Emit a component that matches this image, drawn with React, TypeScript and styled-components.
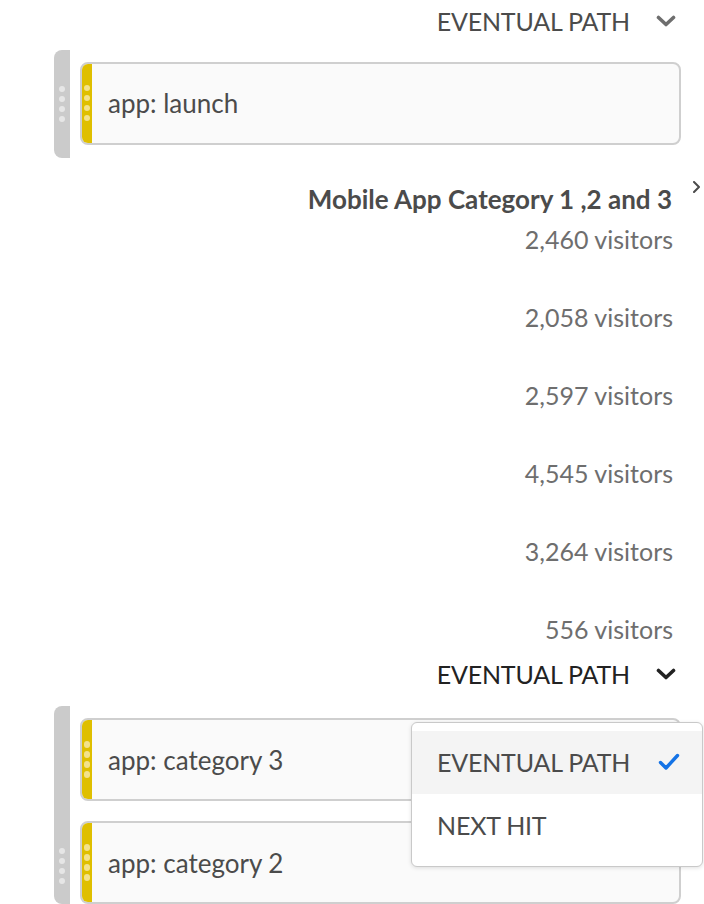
import React from 'react';
import styled, { createGlobalStyle } from 'styled-components';

const GlobalStyle = createGlobalStyle`
  html, body {
    margin: 0;
    padding: 0;
    background: #ffffff;
  }
  body {
    font-family: Lato, "Liberation Sans", sans-serif;
    color: #4b4b4b;
  }
`;

const Page = styled.div`
  width: 704px;
  height: 904px;
  overflow: hidden;
  display: flex;
  flex-direction: column;
  padding-top: 2px;
  box-sizing: border-box;
`;

const PathHeader = styled.div<{ $dark?: boolean; $top?: number }>`
  position: relative;
  height: ${(p) => (p.$dark ? 44 : 42)}px;
  margin-top: ${(p) => p.$top ?? 0}px;
  display: flex;
  align-items: center;
  justify-content: flex-end;
  gap: 26px;
  padding-right: 28px;
  font-size: 25px;
  letter-spacing: -0.2px;
  color: ${(p) => (p.$dark ? '#222222' : '#4b4b4b')};
`;

const Chevron = styled.svg`
  width: 20px;
  height: 12px;
`;

const Group = styled.div<{ $top: number }>`
  display: flex;
  margin-top: ${(p) => p.$top}px;
  padding-left: 54px;
  padding-right: 23px;
`;

const Rail = styled.div<{ $dotsAt: 'start' | 'end' }>`
  width: 16px;
  flex: none;
  background: #cbcbcb;
  border-radius: 8px 0 0 8px;
  display: flex;
  flex-direction: column;
  align-items: center;
  justify-content: ${(p) => (p.$dotsAt === 'start' ? 'flex-start' : 'flex-end')};
  padding: ${(p) => (p.$dotsAt === 'start' ? '36px 0 0' : '0 0 20px')};
  box-sizing: border-box;
`;

const Dots = styled.div<{ $color: string }>`
  display: flex;
  flex-direction: column;
  gap: 3.5px;

  span {
    display: block;
    width: 6.5px;
    height: 6.5px;
    border-radius: 50%;
    background: ${(p) => p.$color};
  }
`;

const Cards = styled.div<{ $pad: string }>`
  flex: 1;
  display: flex;
  flex-direction: column;
  gap: 20px;
  padding: ${(p) => p.$pad};
  margin-left: 10px;
`;

const Card = styled.div`
  height: 83px;
  box-sizing: border-box;
  border: 2px solid #cfcfcf;
  border-radius: 8px;
  background: #fafafa;
  display: flex;
  align-items: stretch;
  overflow: hidden;
`;

const Strip = styled.div`
  width: 10px;
  flex: none;
  background: #dfbf00;
  display: flex;
  align-items: center;
  justify-content: center;
`;

const CardLabel = styled.div`
  display: flex;
  align-items: center;
  padding-left: 16px;
  font-size: 26px;
  color: #4b4b4b;
`;

const Summary = styled.div`
  margin-top: 21px;
  display: flex;
  flex-direction: column;
  align-items: flex-end;
`;

const TitleRow = styled.div`
  height: 40px;
  display: flex;
  align-items: center;
  padding-right: 4px;
`;

const Title = styled.div`
  font-size: 26px;
  font-weight: 700;
  color: #4b4b4b;
`;

const SmallChevron = styled.svg`
  width: 7px;
  height: 12px;
  margin-left: 21px;
  align-self: flex-start;
  margin-top: 2px;
`;

const Visitors = styled.div<{ $first?: boolean }>`
  height: 40px;
  line-height: 40px;
  margin-top: ${(p) => (p.$first ? 0 : 38)}px;
  padding-right: 31px;
  font-size: 25px;
  color: #6e6e6e;
`;

const Menu = styled.div`
  position: absolute;
  top: 67px;
  right: 1px;
  width: 292px;
  height: 145px;
  box-sizing: border-box;
  background: #ffffff;
  border: 1.5px solid #c9c9c9;
  border-radius: 6px;
  box-shadow: 0 1px 4px rgba(0, 0, 0, 0.12);
  padding-top: 8px;
  z-index: 2;
  color: #4b4b4b;
`;

const MenuItem = styled.div<{ $active?: boolean }>`
  height: 63px;
  display: flex;
  align-items: center;
  justify-content: space-between;
  padding: 0 22px 0 25px;
  background: ${(p) => (p.$active ? '#f4f4f4' : 'transparent')};
  font-size: 25px;
`;

const visitors = ['2,460', '2,058', '2,597', '4,545', '3,264', '556'];

const DotColumn = ({ color }: { color: string }) => (
  <Dots $color={color}>
    <span />
    <span />
    <span />
    <span />
  </Dots>
);

const DownChevron = ({ color }: { color: string }) => (
  <Chevron viewBox="0 0 20 12">
    <polyline
      points="2.5,2.5 10,9.5 17.5,2.5"
      fill="none"
      stroke={color}
      strokeWidth="3.6"
      strokeLinecap="round"
      strokeLinejoin="round"
    />
  </Chevron>
);

const StepCard = ({ label }: { label: string }) => (
  <Card>
    <Strip>
      <DotColumn color="#f3e28a" />
    </Strip>
    <CardLabel>{label}</CardLabel>
  </Card>
);

export default function App() {
  return (
    <Page>
      <GlobalStyle />
      <PathHeader>
        <span>EVENTUAL PATH</span>
        <DownChevron color="#6e6e6e" />
      </PathHeader>

      <Group $top={10}>
        <Rail $dotsAt="start">
          <DotColumn color="#e6e6e6" />
        </Rail>
        <Cards $pad="12px 0 13px">
          <StepCard label="app: launch" />
        </Cards>
      </Group>

      <Summary>
        <TitleRow>
          <Title>Mobile App Category 1 ,2 and 3</Title>
          <SmallChevron viewBox="0 0 7 12">
            <polyline
              points="1,1 6,6 1,11"
              fill="none"
              stroke="#4b4b4b"
              strokeWidth="2"
              strokeLinecap="round"
              strokeLinejoin="round"
            />
          </SmallChevron>
        </TitleRow>
        {visitors.map((v, i) => (
          <Visitors key={v} $first={i === 0}>
            {v} visitors
          </Visitors>
        ))}
      </Summary>

      <PathHeader $dark $top={6}>
        <span>EVENTUAL PATH</span>
        <DownChevron color="#222222" />
        <Menu>
          <MenuItem $active>
            <span>EVENTUAL PATH</span>
            <svg width="22" height="18" viewBox="0 0 22 18">
              <polyline
                points="2.5,9.5 8,15 19.5,2.5"
                fill="none"
                stroke="#1473e6"
                strokeWidth="3.4"
                strokeLinecap="round"
                strokeLinejoin="round"
              />
            </svg>
          </MenuItem>
          <MenuItem>
            <span>NEXT HIT</span>
          </MenuItem>
        </Menu>
      </PathHeader>

      <Group $top={12}>
        <Rail $dotsAt="end">
          <DotColumn color="#e6e6e6" />
        </Rail>
        <Cards $pad="12px 0 0">
          <StepCard label="app: category 3" />
          <StepCard label="app: category 2" />
        </Cards>
      </Group>
    </Page>
  );
}
